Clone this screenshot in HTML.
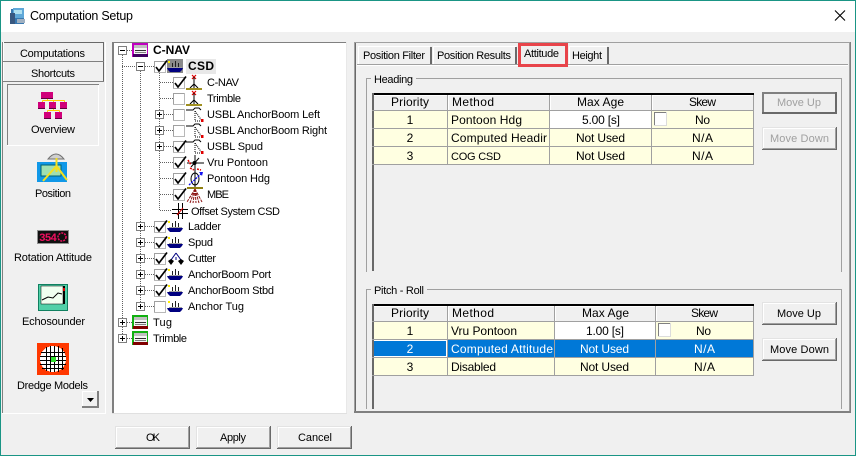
<!DOCTYPE html>
<html><head><meta charset="utf-8"><title>Computation Setup</title>
<style>
html,body{margin:0;padding:0;background:#f0f0f0;width:856px;height:456px;overflow:hidden}
svg{display:block}
text{font-family:"Liberation Sans",sans-serif;font-size:11px;fill:#000}
.t{font-size:12px}
.b{font-weight:bold;font-size:12px}
.m{text-anchor:middle}
.d{fill:#a0a0a0}
.w{fill:#fff}
.box{shape-rendering:crispEdges}
</style></head><body>
<svg width="856" height="456" viewBox="0 0 856 456" xmlns="http://www.w3.org/2000/svg">
<defs>
<g id="btn" class="box"><rect width="75" height="23" fill="#f0f0f0"/><rect width="75" height="1" fill="#e3e3e3"/><rect y="0" width="1" height="23" fill="#e3e3e3"/><rect x="1" y="1" width="73" height="1" fill="#fff"/><rect x="1" y="1" width="1" height="21" fill="#fff"/><rect x="73" y="1" width="1" height="21" fill="#a0a0a0"/><rect x="1" y="21" width="73" height="1" fill="#a0a0a0"/><rect x="74" width="1" height="23" fill="#696969"/><rect y="22" width="75" height="1" fill="#696969"/></g>
<g id="btnf" class="box"><rect width="75" height="22" fill="#f0f0f0"/><rect x="0" y="0" width="75" height="2" fill="#808080"/><rect width="2" height="22" fill="#808080"/><rect x="73" width="2" height="22" fill="#696969"/><rect y="20" width="75" height="2" fill="#696969"/><rect x="2" y="2" width="71" height="18" fill="#efefef"/></g>
<g id="cb" class="box"><rect width="12" height="12" fill="#fff"/><rect width="12" height="1" fill="#a0a0a0"/><rect width="1" height="12" fill="#a0a0a0"/><rect x="11" width="1" height="12" fill="#b8b8b8"/><rect y="11" width="12" height="1" fill="#b8b8b8"/></g>
<path id="chk" d="M2 6L5 10L13-0.5" fill="none" stroke="#000" stroke-width="1.7"/>
<g id="plus" class="box"><rect x="-4" y="-4" width="9" height="9" fill="#808080"/><rect x="-3" y="-3" width="7" height="7" fill="#fff"/><rect x="-2" y="0" width="5" height="1" fill="#000"/><rect x="0" y="-2" width="1" height="5" fill="#000"/></g>
<g id="minus" class="box"><rect x="-4" y="-4" width="9" height="9" fill="#808080"/><rect x="-3" y="-3" width="7" height="7" fill="#fff"/><rect x="-2" y="0" width="5" height="1" fill="#000"/></g>
<g id="ship"><rect x="1" y="0" width="2" height="2" fill="#ffee00"/><path d="M8.500 0V6M5.500 2V6M11.500 2V6" stroke="#202020" stroke-width="1" fill="none" class="box"/><rect x="2" y="6" width="13" height="1" fill="#a0a0a0" class="box"/><path d="M0 7H16L15 9L13 11H3L1 9Z" fill="#000080"/></g>
<g id="gps"><path d="M8 1L12 5M12 1L8 5" stroke="#e00000" stroke-width="1.2"/><path d="M10 3V14M6 14L10 10L14 14" stroke="#000" fill="none"/><rect x="2" y="14" width="16" height="2" fill="#a09020"/></g>
<g id="usbl"><path d="M0 3H7L9 1H13L15 3" fill="none" stroke="#000"/><path d="M9 4V14H16L9 4" fill="none" stroke="#000" stroke-dasharray="1 1"/><rect x="15" y="12" width="2.5" height="3" fill="#e00000"/></g>
<g id="vru"><path d="M1 9H18M9 1V17M13 4L5 13" stroke="#000" fill="none"/><circle cx="8.500" cy="9" r="2" fill="#000"/><path d="M2 6L5 11M4 14L8 16M11 15L15 16" stroke="#e00000" stroke-width="1.500" stroke-dasharray="2 1" fill="none"/></g>
<g id="hdg"><ellipse cx="9" cy="9" rx="4" ry="6" fill="none" stroke="#000"/><path d="M9 0V17" stroke="#000"/><path d="M3 15L16 3" stroke="#1010f0" stroke-dasharray="2 1" stroke-width="1.300"/><path d="M13 2L17 2L16 6Z" fill="#1010f0"/></g>
<g id="mbe"><rect x="1" y="0" width="16" height="2" fill="#908010"/><path d="M9 2L1 15M9 2L4 16M9 2L7 16M9 2L10 16M9 2L13 16M9 2L16 15" stroke="#8a1010" stroke-dasharray="3 1" fill="none"/></g>
<g id="off"><path d="M0 6.500H16M0 10.500H16M6.500 0V16M10.500 0V16" stroke="#000" fill="none"/><path d="M5 12L11 5" stroke="#e00000"/></g>
<g id="cut"><path d="M8 1L3 8M8 1L13 8M8 5L8 8" stroke="#000080" fill="none"/><path d="M0 9L3 7L6 9L3 13Z M10 9L13 7L16 9L13 13Z" fill="#000"/></g>
<g id="comp" class="box"><rect x="0" y="0" width="16" height="14" fill="#10b010"/><rect x="2" y="2" width="13" height="3" fill="#c0c0c0"/><rect x="2" y="5" width="13" height="6" fill="#f4f4f4"/><rect x="3" y="7" width="11" height="1" fill="#303030"/><rect x="3" y="9" width="11" height="1" fill="#808080"/><rect x="1" y="11" width="15" height="3" fill="#800000"/></g>
</defs>

<!-- window -->
<rect class="box" width="856" height="456" fill="#f0f0f0"/>
<rect class="box" width="856" height="32" fill="#fff"/>
<rect class="box" y="0" width="856" height="1" fill="#1a9585"/>
<rect class="box" y="455" width="856" height="1" fill="#1a9585"/>
<rect class="box" x="0" width="1" height="456" fill="#1a9585"/>
<rect class="box" x="855" width="1" height="456" fill="#1a9585"/>

<!-- title icon -->
<rect x="11" y="9" width="13" height="15" fill="#3878b0"/>
<rect x="13" y="8" width="11" height="10" fill="#60a8d8"/>
<rect x="14" y="10" width="8" height="4" fill="#b0e0f0"/>
<rect x="10" y="13" width="5" height="11" fill="#385880"/>
<rect x="17" y="19" width="8" height="4" fill="#a0b0c0"/>
<text x="30" y="20" class="t" textLength="103" lengthAdjust="spacing" style="font-size:12.5px">Computation Setup</text>
<path d="M835 10.500L845 20.500M845 10.500L835 20.500" stroke="#000" stroke-width="1.100"/>

<!-- left panel -->
<rect class="box" x="2" y="42" width="1" height="372" fill="#808080"/>
<rect class="box" x="105" y="42" width="1" height="372" fill="#fff"/>
<rect class="box" x="2" y="413" width="104" height="1" fill="#fff"/>
<g class="box">
<rect x="3" y="42" width="101" height="20" fill="#f0f0f0"/><rect x="3" y="42" width="101" height="1" fill="#696969"/><rect x="3" y="42" width="1" height="20" fill="#fff"/><rect x="103" y="42" width="1" height="20" fill="#696969"/><rect x="3" y="61" width="101" height="1" fill="#808080"/>
<rect x="3" y="62" width="101" height="20" fill="#f0f0f0"/><rect x="3" y="62" width="1" height="20" fill="#fff"/><rect x="103" y="62" width="1" height="20" fill="#696969"/><rect x="3" y="81" width="101" height="1" fill="#808080"/>
<rect x="7" y="84" width="92" height="1" fill="#808080"/><rect x="7" y="84" width="1" height="62" fill="#808080"/><rect x="98" y="85" width="1" height="61" fill="#fff"/><rect x="7" y="145" width="92" height="1" fill="#fff"/>
</g>
<text x="20" y="57" textLength="65" lengthAdjust="spacing">Computations</text>
<text x="31" y="77" textLength="44" lengthAdjust="spacing">Shortcuts</text>
<!-- overview icon -->
<g class="box">
<path d="M47.500 98V100.500M42.500 100.500H64.500M42.500 100.500V103M53.500 100.500V103M64.500 100.500V103M53.500 107V110.500M47.500 110.500H59.500M47.500 110.500V113M59.500 110.500V113" stroke="#ffd000" fill="none"/>
<rect x="41" y="92" width="12" height="6" fill="#d0007a"/>
<rect x="38" y="102" width="7" height="6" fill="#d0007a"/><rect x="49" y="102" width="7" height="6" fill="#d0007a"/><rect x="60" y="102" width="7" height="6" fill="#d0007a"/>
<rect x="44" y="112" width="7" height="6" fill="#d0007a"/><rect x="55" y="112" width="7" height="6" fill="#d0007a"/>
<path d="M41 98.500H53M38 108.500H45M49 108.500H56M60 108.500H67M44 118.500H51M55 118.500H62" stroke="#600040"/>
</g>
<text x="31" y="133" textLength="44" lengthAdjust="spacing">Overview</text>
<!-- position icon -->
<path d="M48 159Q56 149 64 159Z" fill="#d0d0d0" stroke="#707070"/>
<rect x="37" y="162" width="30" height="20" fill="#1098e8"/>
<rect x="41" y="165" width="20" height="11" fill="#a0e0b0" stroke="#006070"/>
<path d="M56.500 158V172M56.500 166L43 181M56.500 166L67 180" stroke="#f4e020" stroke-width="2" fill="none"/>
<text x="35" y="197" textLength="36" lengthAdjust="spacing">Position</text>
<!-- rotation icon -->
<rect x="37.500" y="230.500" width="31" height="13" fill="#101010" stroke="#909090"/>
<text x="39" y="241" style="font-size:11px;fill:#f01060;font-family:'Liberation Mono',monospace;font-weight:bold" textLength="18" lengthAdjust="spacing">354</text>
<circle cx="62" cy="237" r="4" fill="none" stroke="#f01060" stroke-width="1.500" stroke-dasharray="2 1"/>
<text x="14" y="261" textLength="78" lengthAdjust="spacing">Rotation Attitude</text>
<!-- echo icon -->
<rect x="38.500" y="284.500" width="29" height="26" fill="#50d0a8" stroke="#108060"/>
<rect x="41" y="286" width="22" height="18" fill="#f0fff0" stroke="#000" stroke-width=".5"/>
<path d="M42 300L48 297L53 298L58 293L62 294" fill="none" stroke="#000"/>
<rect x="63" y="286" width="2" height="18" fill="#000"/><rect x="63" y="288" width="2" height="3" fill="#e00000"/>
<text x="22" y="325" textLength="63" lengthAdjust="spacing">Echosounder</text>
<!-- dredge icon -->
<g class="box">
<rect x="37" y="343" width="32" height="32" fill="#ff3800"/>
<circle cx="53" cy="359" r="13" fill="#fff"/>
<path d="M46.500 347V371M50.500 346V372M54.500 346V372M58.500 346V372M62.500 348V370M41 352.500H65M40 356.500H66M40 360.500H66M40 364.500H66M42 368.500H64" stroke="#000" fill="none"/>
<rect x="51" y="357" width="5" height="5" fill="#30e030"/>
</g>
<text x="17" y="389" textLength="71" lengthAdjust="spacing">Dredge Models</text>
<g class="box">
<rect x="82" y="391" width="17" height="17" fill="#f0f0f0"/><rect x="82" y="391" width="17" height="1" fill="#fff"/><rect x="82" y="391" width="1" height="17" fill="#fff"/><rect x="97" y="391" width="2" height="17" fill="#808080"/><rect x="82" y="406" width="17" height="2" fill="#808080"/>
</g>
<path d="M87 398H94L90.500 402Z" fill="#000"/>

<!-- tree -->
<g class="box">
<rect x="112" y="42" width="235" height="372" fill="#fff"/>
<rect x="112" y="42" width="235" height="1" fill="#808080"/><rect x="112" y="42" width="2" height="372" fill="#808080"/>
<rect x="346" y="42" width="1" height="372" fill="#e8e8e8"/><rect x="112" y="413" width="235" height="1" fill="#e0e0e0"/>
</g>
<g stroke="#606060" stroke-dasharray="1 1" fill="none" class="box">
<path d="M122.500 55V338M140.500 71V306M159.500 71V210M127 50.500H132M127 322.500H132M127 338.500H132"/>
<path d="M122 66.500H136M145 66.500H154M145 226.500H154M145 242.500H154M145 258.500H154M145 274.500H154M145 290.500H154M145 306.500H154"/>
<path d="M160 82.500H173M160 98.500H173M164 114.500H173M164 130.500H173M164 146.500H173M160 162.500H173M160 178.500H173M160 194.500H173M160 210.500H172"/>
</g>
<use href="#minus" x="122" y="50"/><use href="#plus" x="122" y="322"/><use href="#plus" x="122" y="338"/>
<use href="#minus" x="140" y="66"/><use href="#plus" x="140" y="226"/><use href="#plus" x="140" y="242"/><use href="#plus" x="140" y="258"/><use href="#plus" x="140" y="274"/><use href="#plus" x="140" y="290"/><use href="#plus" x="140" y="306"/>
<use href="#plus" x="159" y="114"/><use href="#plus" x="159" y="130"/><use href="#plus" x="159" y="146"/>

<!-- C-NAV root icon -->
<g class="box">
<rect x="132" y="43" width="16" height="14" fill="#c000c0"/><rect x="134" y="45" width="13" height="3" fill="#c0c0c0"/><rect x="134" y="48" width="13" height="6" fill="#f4f4f4"/><rect x="135" y="50" width="11" height="1" fill="#303030"/><rect x="135" y="52" width="11" height="1" fill="#808080"/><rect x="133" y="54" width="15" height="3" fill="#400060"/>
</g>
<text x="153" y="54" class="b" textLength="37" lengthAdjust="spacing">C-NAV</text>
<!-- CSD -->
<use href="#cb" x="154" y="61"/>
<rect x="167" y="59" width="16" height="14" fill="#8a8a8a"/><use href="#ship" x="167" y="61"/>
<use href="#chk" x="154" y="61"/>
<rect x="186" y="59" width="30" height="15" fill="#e8e8e8"/>
<text x="188" y="70" class="b" textLength="26" lengthAdjust="spacing">CSD</text>
<!-- level 2 -->
<use href="#cb" x="173" y="77"/><use href="#chk" x="173" y="77"/><use href="#gps" x="184" y="74"/>
<text x="207" y="86" textLength="32" lengthAdjust="spacing">C-NAV</text>
<use href="#cb" x="173" y="93"/><use href="#gps" x="184" y="90"/>
<text x="207" y="102" textLength="34" lengthAdjust="spacing">Trimble</text>
<use href="#cb" x="173" y="109"/><use href="#usbl" x="186" y="107"/>
<text x="207" y="118" textLength="113" lengthAdjust="spacing">USBL AnchorBoom Left</text>
<use href="#cb" x="173" y="125"/><use href="#usbl" x="186" y="123"/>
<text x="207" y="134" textLength="120" lengthAdjust="spacing">USBL AnchorBoom Right</text>
<use href="#cb" x="173" y="141"/><use href="#usbl" x="186" y="139"/><use href="#chk" x="173" y="141"/>
<text x="207" y="150" textLength="56" lengthAdjust="spacing">USBL Spud</text>
<use href="#cb" x="173" y="157"/><use href="#vru" x="186" y="154"/><use href="#chk" x="173" y="157"/>
<text x="207" y="166" textLength="61" lengthAdjust="spacing">Vru Pontoon</text>
<use href="#cb" x="173" y="173"/><use href="#hdg" x="186" y="170"/><use href="#chk" x="173" y="173"/>
<text x="207" y="182" textLength="63" lengthAdjust="spacing">Pontoon Hdg</text>
<use href="#cb" x="173" y="189"/><use href="#mbe" x="186" y="187"/><use href="#chk" x="173" y="189"/>
<text x="207" y="198" textLength="22" lengthAdjust="spacing">MBE</text>
<use href="#off" x="172" y="203"/>
<text x="191" y="215" textLength="89" lengthAdjust="spacing">Offset System CSD</text>
<!-- level 1 -->
<use href="#cb" x="154" y="221"/><use href="#ship" x="167" y="221"/><use href="#chk" x="154" y="221"/>
<text x="188" y="230" textLength="33" lengthAdjust="spacing">Ladder</text>
<use href="#cb" x="154" y="237"/><use href="#ship" x="167" y="237"/><use href="#chk" x="154" y="237"/>
<text x="188" y="246" textLength="25" lengthAdjust="spacing">Spud</text>
<use href="#cb" x="154" y="253"/><use href="#cut" x="168" y="252"/><use href="#chk" x="154" y="253"/>
<text x="188" y="262" textLength="28" lengthAdjust="spacing">Cutter</text>
<use href="#cb" x="154" y="269"/><use href="#ship" x="167" y="269"/><use href="#chk" x="154" y="269"/>
<text x="188" y="278" textLength="83" lengthAdjust="spacing">AnchorBoom Port</text>
<use href="#cb" x="154" y="285"/><use href="#ship" x="167" y="285"/><use href="#chk" x="154" y="285"/>
<text x="188" y="294" textLength="86" lengthAdjust="spacing">AnchorBoom Stbd</text>
<use href="#cb" x="154" y="301"/><use href="#ship" x="167" y="301"/>
<text x="188" y="310" textLength="56" lengthAdjust="spacing">Anchor Tug</text>
<use href="#comp" x="132" y="315"/>
<text x="153" y="326" textLength="19" lengthAdjust="spacing">Tug</text>
<use href="#comp" x="132" y="331"/>
<text x="153" y="342" textLength="34" lengthAdjust="spacing">Trimble</text>

<!-- tab frame -->
<g class="box">
<rect x="354" y="42" width="497" height="371" fill="#f0f0f0"/>
<rect x="354" y="42" width="497" height="1" fill="#a0a0a0"/>
<rect x="354" y="42" width="1" height="371" fill="#a0a0a0"/><rect x="355" y="43" width="1" height="369" fill="#696969"/>
<rect x="850" y="42" width="1" height="371" fill="#808080"/><rect x="849" y="43" width="1" height="369" fill="#a0a0a0"/>
<rect x="354" y="411" width="497" height="2" fill="#808080"/>
<rect x="357" y="64" width="491" height="1" fill="#a0a0a0"/>
<rect x="357" y="65" width="491" height="1" fill="#fff"/>
<!-- tabs -->
<rect x="358" y="46" width="1" height="18" fill="#fff"/><rect x="358" y="46" width="72" height="1" fill="#fff"/><rect x="430" y="47" width="2" height="17" fill="#696969"/>
<rect x="433" y="46" width="1" height="18" fill="#fff"/><rect x="433" y="46" width="83" height="1" fill="#fff"/><rect x="515" y="47" width="2" height="17" fill="#696969"/>
<rect x="569" y="46" width="1" height="18" fill="#fff"/><rect x="569" y="46" width="38" height="1" fill="#fff"/><rect x="607" y="47" width="2" height="17" fill="#696969"/>
<rect x="520" y="64" width="46" height="2" fill="#f0f0f0"/>
</g>
<text x="363" y="59" textLength="62" lengthAdjust="spacing">Position Filter</text>
<text x="437" y="59" textLength="74" lengthAdjust="spacing">Position Results</text>
<text x="524" y="57" textLength="35" lengthAdjust="spacing">Attitude</text>
<text x="572" y="59" textLength="30" lengthAdjust="spacing">Height</text>
<rect x="519.500" y="44.500" width="47" height="21" fill="none" stroke="#e8444a" stroke-width="3" class="box"/>

<!-- Heading group -->
<g class="box">
<rect x="366" y="78" width="5" height="1" fill="#a0a0a0"/><rect x="416" y="78" width="426" height="1" fill="#a0a0a0"/>
<rect x="366" y="78" width="1" height="194" fill="#a0a0a0"/><rect x="841" y="78" width="1" height="194" fill="#a0a0a0"/>
</g>
<text x="374" y="83" textLength="39" lengthAdjust="spacing">Heading</text>

<!-- Heading table -->
<g class="box">
<rect x="373" y="111" width="381" height="54" fill="#ffffe1"/>
<rect x="550" y="111" width="101" height="17" fill="#fff"/>
<rect x="372" y="93" width="382" height="2" fill="#000"/>
<rect x="372" y="93" width="2" height="178" fill="#696969"/>
<rect x="374" y="95" width="380" height="1" fill="#fff"/>
<rect x="447" y="95" width="1" height="70" fill="#a0a0a0"/><rect x="448" y="95" width="1" height="15" fill="#fff"/>
<rect x="549" y="95" width="1" height="70" fill="#a0a0a0"/><rect x="550" y="95" width="1" height="15" fill="#fff"/>
<rect x="651" y="95" width="1" height="70" fill="#a0a0a0"/><rect x="652" y="95" width="1" height="15" fill="#fff"/>
<rect x="753" y="95" width="1" height="70" fill="#a0a0a0"/>
<rect x="372" y="110" width="382" height="1" fill="#a0a0a0"/><rect x="372" y="128" width="382" height="1" fill="#a0a0a0"/><rect x="372" y="146" width="382" height="1" fill="#a0a0a0"/><rect x="372" y="164" width="382" height="1" fill="#a0a0a0"/>
<rect x="654" y="112" width="13" height="14" fill="#fff"/><rect x="654" y="112" width="13" height="1" fill="#808080"/><rect x="654" y="112" width="1" height="14" fill="#808080"/><rect x="666" y="112" width="1" height="14" fill="#dcdcdc"/><rect x="654" y="125" width="13" height="1" fill="#dcdcdc"/>
</g>
<text class="t" x="391" y="106" textLength="38" lengthAdjust="spacing">Priority</text>
<text class="t" x="452" y="106" textLength="42" lengthAdjust="spacing">Method</text>
<text class="t" x="577" y="106" textLength="47" lengthAdjust="spacing">Max Age</text>
<text class="t" x="689" y="106" textLength="27" lengthAdjust="spacing">Skew</text>
<text class="t m" x="410" y="124">1</text>
<text class="t" x="451" y="124" textLength="71" lengthAdjust="spacing">Pontoon Hdg</text>
<text class="t" x="582" y="124" textLength="38" lengthAdjust="spacing">5.00 [s]</text>
<text class="t" x="695" y="124" textLength="15" lengthAdjust="spacing">No</text>
<text class="t m" x="410" y="142">2</text>
<text class="t" x="451" y="142" textLength="96" lengthAdjust="spacing">Computed Headir</text>
<text class="t" x="576" y="142" textLength="49" lengthAdjust="spacing">Not Used</text>
<text class="t" x="692" y="142" textLength="21" lengthAdjust="spacing">N/A</text>
<text class="t m" x="410" y="160">3</text>
<text x="451" y="160" textLength="50" lengthAdjust="spacing">COG CSD</text>
<text class="t" x="576" y="160" textLength="49" lengthAdjust="spacing">Not Used</text>
<text class="t" x="692" y="160" textLength="21" lengthAdjust="spacing">N/A</text>
<use href="#btnf" x="762" y="92"/>
<text x="777" y="106" textLength="44" lengthAdjust="spacing" class="d">Move Up</text>
<use href="#btn" x="762" y="127"/>
<text x="770" y="142" textLength="59" lengthAdjust="spacing" class="d">Move Down</text>

<!-- Pitch roll group -->
<g class="box">
<rect x="366" y="289" width="5" height="1" fill="#a0a0a0"/><rect x="427" y="289" width="415" height="1" fill="#a0a0a0"/>
<rect x="366" y="289" width="1" height="120" fill="#a0a0a0"/><rect x="841" y="289" width="1" height="120" fill="#a0a0a0"/>
</g>
<text x="374" y="294" textLength="50" lengthAdjust="spacing">Pitch - Roll</text>

<!-- Pitch table -->
<g class="box">
<rect x="373" y="322" width="381" height="54" fill="#ffffe1"/>
<rect x="555" y="322" width="100" height="17" fill="#fff"/>
<rect x="372" y="340" width="382" height="17" fill="#0078d7"/>
<rect x="373" y="340" width="74" height="17" fill="#fff"/><rect x="374" y="341" width="72" height="15" fill="#0078d7"/>
<rect x="372" y="304" width="382" height="2" fill="#000"/>
<rect x="372" y="304" width="2" height="105" fill="#696969"/>
<rect x="374" y="306" width="380" height="1" fill="#fff"/>
<rect x="447" y="306" width="1" height="70" fill="#a0a0a0"/><rect x="448" y="306" width="1" height="15" fill="#fff"/>
<rect x="554" y="306" width="1" height="70" fill="#a0a0a0"/><rect x="555" y="306" width="1" height="15" fill="#fff"/>
<rect x="655" y="306" width="1" height="70" fill="#a0a0a0"/><rect x="656" y="306" width="1" height="15" fill="#fff"/>
<rect x="753" y="306" width="1" height="70" fill="#a0a0a0"/>
<rect x="372" y="321" width="382" height="1" fill="#a0a0a0"/><rect x="372" y="339" width="382" height="1" fill="#a0a0a0"/><rect x="372" y="357" width="382" height="1" fill="#a0a0a0"/><rect x="372" y="375" width="382" height="1" fill="#a0a0a0"/>
<rect x="658" y="323" width="13" height="14" fill="#fff"/><rect x="658" y="323" width="13" height="1" fill="#808080"/><rect x="658" y="323" width="1" height="14" fill="#808080"/><rect x="670" y="323" width="1" height="14" fill="#dcdcdc"/><rect x="658" y="336" width="13" height="1" fill="#dcdcdc"/>
</g>
<text class="t" x="391" y="317" textLength="38" lengthAdjust="spacing">Priority</text>
<text class="t" x="452" y="317" textLength="42" lengthAdjust="spacing">Method</text>
<text class="t" x="582" y="317" textLength="47" lengthAdjust="spacing">Max Age</text>
<text class="t" x="691" y="317" textLength="27" lengthAdjust="spacing">Skew</text>
<text class="t m" x="410" y="335">1</text>
<text class="t" x="451" y="335" textLength="66" lengthAdjust="spacing">Vru Pontoon</text>
<text class="t" x="586" y="335" textLength="38" lengthAdjust="spacing">1.00 [s]</text>
<text class="t" x="696" y="335" textLength="15" lengthAdjust="spacing">No</text>
<text class="t m w" x="410" y="353">2</text>
<text class="t w" x="451" y="353" textLength="102" lengthAdjust="spacing">Computed Attitude</text>
<text class="t w" x="580" y="353" textLength="49" lengthAdjust="spacing">Not Used</text>
<text class="t w" x="694" y="353" textLength="21" lengthAdjust="spacing">N/A</text>
<text class="t m" x="410" y="371">3</text>
<text class="t" x="451" y="371" textLength="45" lengthAdjust="spacing">Disabled</text>
<text class="t" x="580" y="371" textLength="49" lengthAdjust="spacing">Not Used</text>
<text class="t" x="694" y="371" textLength="21" lengthAdjust="spacing">N/A</text>
<use href="#btn" x="762" y="302"/>
<text x="777" y="317" textLength="44" lengthAdjust="spacing">Move Up</text>
<use href="#btn" x="762" y="338"/>
<text x="770" y="353" textLength="59" lengthAdjust="spacing">Move Down</text>

<!-- bottom buttons -->
<use href="#btn" x="115" y="426"/>
<text x="146" y="441" textLength="14" lengthAdjust="spacing">OK</text>
<use href="#btn" x="196" y="426"/>
<text x="220" y="441" textLength="26" lengthAdjust="spacing">Apply</text>
<use href="#btn" x="277" y="426"/>
<text x="298" y="441" textLength="34" lengthAdjust="spacing">Cancel</text>
</svg>
</body></html>
